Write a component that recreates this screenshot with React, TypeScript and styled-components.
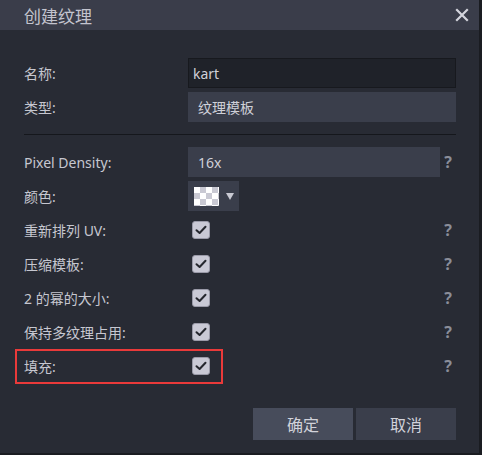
import React from "react";
import styled, { createGlobalStyle } from "styled-components";

const Global = createGlobalStyle`
  html, body { margin: 0; padding: 0; background: #1b1d22; }
  body { font-family: "Noto Sans", "Noto Sans CJK SC", sans-serif; }
`;

const Window = styled.div`
  width: 479px;
  height: 453px;
  border-right: 3px solid #1a1c21;
  border-bottom: 2px solid #1a1c21;
  background: #282b34;
  display: flex;
  flex-direction: column;
  color: #c9c9d2;
`;

const TitleBar = styled.div`
  height: 30px;
  background: #3a3d4a;
  display: flex;
  align-items: center;
  justify-content: space-between;
  padding: 0 10px 0 24px;
  flex-shrink: 0;
`;

const Title = styled.div`
  font-size: 17px;
  color: #c3c4ce;
  font-family: "Noto Sans CJK SC", sans-serif;
`;

const Close = styled.div`
  width: 14px;
  height: 14px;
  display: flex;
  svg { display: block; }
`;

const Body = styled.div`
  padding: 28px 23px 0 24px;
  display: flex;
  flex-direction: column;
  flex: 1;
`;

const Rows = styled.div`
  display: flex;
  flex-direction: column;
  gap: 4px;
`;

const Row = styled.div<{ $highlight?: boolean }>`
  position: relative;
  display: grid;
  grid-template-columns: 164px 252px 16px;
  height: 30px;
  align-items: center;
  ${(p) =>
    p.$highlight &&
    `
    &::after {
      content: "";
      position: absolute;
      left: -9px;
      top: -2px;
      width: 208px;
      height: 35px;
      box-sizing: border-box;
      border: 2px solid #ea3a3a;
      pointer-events: none;
    }
  `}
`;

const Label = styled.div`
  font-size: 14px;
  color: #c6c7d0;
  font-family: "Noto Sans", "Noto Sans CJK SC", sans-serif;
  white-space: nowrap;
`;

const Field = styled.div<{ $dark?: boolean; $span?: boolean }>`
  height: 30px;
  box-sizing: border-box;
  grid-column: ${(p) => (p.$span ? "2 / span 2" : "2")};
  background: ${(p) => (p.$dark ? "#1f2229" : "#3a3e4b")};
  border: ${(p) => (p.$dark ? "1px solid #17191e" : "none")};
  display: flex;
  align-items: center;
  padding-left: ${(p) => (p.$dark ? "4px" : "10px")};
  font-size: 14px;
  color: #cfd0d8;
`;

const ColorCell = styled.div`
  grid-column: 2;
  display: flex;
`;

const ColorPicker = styled.div`
  width: 51px;
  height: 30px;
  background: #3a3e4b;
  display: flex;
  align-items: center;
  padding-left: 6px;
  box-sizing: border-box;
  gap: 7px;
`;

const Swatch = styled.div`
  width: 25px;
  height: 19px;
  background-color: #ffffff;
  background-image:
    linear-gradient(45deg, #c9c9d3 25%, transparent 25%, transparent 75%, #c9c9d3 75%),
    linear-gradient(45deg, #c9c9d3 25%, transparent 25%, transparent 75%, #c9c9d3 75%);
  background-size: 12px 12px;
  background-position: 0 0, 6px 6px;
`;

const Caret = styled.div`
  width: 0;
  height: 0;
  border-left: 4px solid transparent;
  border-right: 4px solid transparent;
  border-top: 7px solid #c9cad3;
`;

const CheckCell = styled.div`
  grid-column: 2;
  padding-left: 4px;
  display: flex;
`;

const Checkbox = styled.div`
  width: 18px;
  height: 18px;
  border-radius: 3px;
  background: #c9c9d5;
  border: 1px solid #9a9aa8;
  box-sizing: border-box;
  display: flex;
  align-items: center;
  justify-content: center;
`;

const Help = styled.div`
  grid-column: 3;
  font-size: 16px;
  font-weight: 700;
  color: #8a8d99;
  text-align: center;
  font-family: "Noto Sans", sans-serif;
`;

const Separator = styled.div`
  height: 1px;
  background: #15171c;
  margin: 12px 0 12px;
`;

const Footer = styled.div`
  display: flex;
  justify-content: flex-end;
  gap: 3px;
  margin-top: 27px;
`;

const Button = styled.div<{ $primary?: boolean }>`
  width: 100px;
  height: 32px;
  background: ${(p) => (p.$primary ? "#474c5b" : "#3a3e4b")};
  color: #d1d2da;
  font-size: 16px;
  display: flex;
  align-items: center;
  justify-content: center;
  font-family: "Noto Sans CJK SC", sans-serif;
`;

const Check = () => (
  <svg width="12" height="10" viewBox="0 0 12 10">
    <path d="M1.5 5.2 L4.6 8 L10.5 1.8" fill="none" stroke="#25272e" strokeWidth="2" strokeLinecap="round" strokeLinejoin="round" />
  </svg>
);

const checkRows = ["重新排列 UV:", "压缩模板:", "2 的幂的大小:", "保持多纹理占用:"];

export default function App() {
  return (
    <>
      <Global />
      <Window>
        <TitleBar>
          <Title>创建纹理</Title>
          <Close>
            <svg width="14" height="14" viewBox="0 0 14 14">
              <path d="M2 2 L12 12 M12 2 L2 12" stroke="#d4d5dd" strokeWidth="2.2" strokeLinecap="square" />
            </svg>
          </Close>
        </TitleBar>
        <Body>
          <Rows>
            <Row>
              <Label>名称:</Label>
              <Field $dark $span>kart</Field>
            </Row>
            <Row>
              <Label>类型:</Label>
              <Field $span>纹理模板</Field>
            </Row>
          </Rows>
          <Separator />
          <Rows>
            <Row>
              <Label>Pixel Density:</Label>
              <Field>16x</Field>
              <Help>?</Help>
            </Row>
            <Row>
              <Label>颜色:</Label>
              <ColorCell>
                <ColorPicker>
                  <Swatch />
                  <Caret />
                </ColorPicker>
              </ColorCell>
            </Row>
            {checkRows.map((t) => (
              <Row key={t}>
                <Label>{t}</Label>
                <CheckCell>
                  <Checkbox>
                    <Check />
                  </Checkbox>
                </CheckCell>
                <Help>?</Help>
              </Row>
            ))}
            <Row $highlight>
              <Label>填充:</Label>
              <CheckCell>
                <Checkbox>
                  <Check />
                </Checkbox>
              </CheckCell>
              <Help>?</Help>
            </Row>
          </Rows>
          <Footer>
            <Button $primary>确定</Button>
            <Button>取消</Button>
          </Footer>
        </Body>
      </Window>
    </>
  );
}
